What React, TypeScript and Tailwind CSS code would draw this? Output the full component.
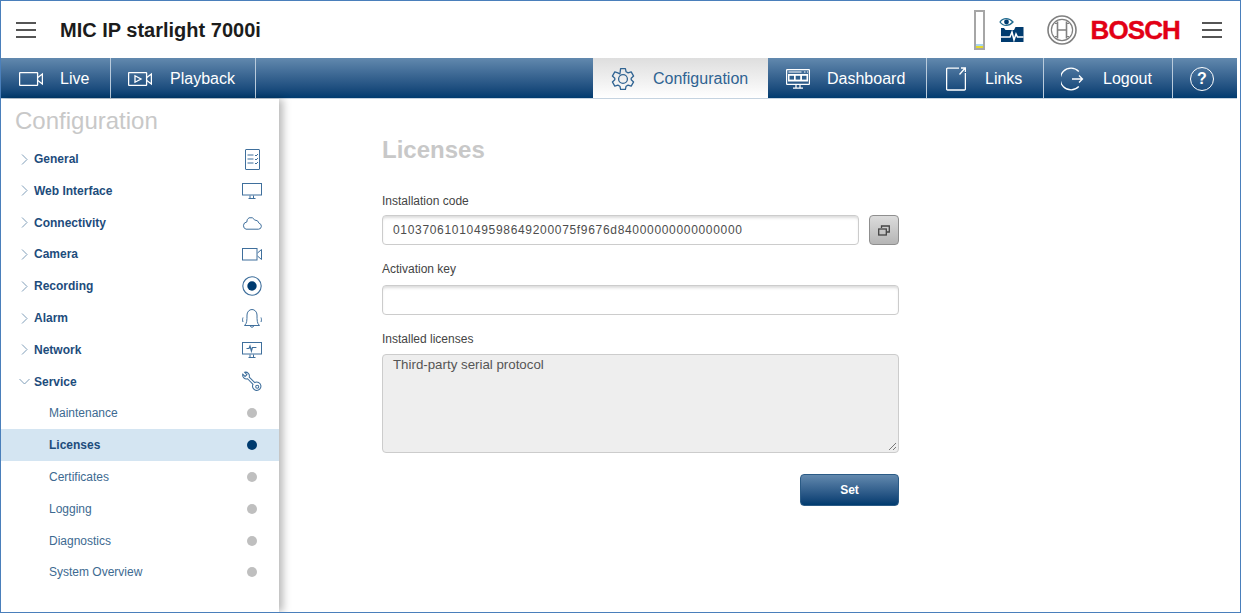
import React from 'react';

const Hamburger = () => (
  <div className="flex w-5 flex-col gap-[5px]">
    <div className="h-[2px] bg-[#555555]" />
    <div className="h-[2px] bg-[#555555]" />
    <div className="h-[2px] bg-[#555555]" />
  </div>
);

const s = { fill: 'none', stroke: 'currentColor', strokeWidth: 1.3 };

const CameraIcon = () => (
  <svg width="24" height="16" viewBox="0 0 24 16" {...s}>
    <rect x="0.6" y="1.6" width="18" height="12.8" rx="0.5" />
    <path d="M18.8 6.5 L23.4 3 V13 L18.8 9.5" />
  </svg>
);

const PlaybackIcon = () => (
  <svg width="24" height="16" viewBox="0 0 24 16" {...s}>
    <rect x="0.6" y="1.6" width="18" height="12.8" rx="0.5" />
    <path d="M18.8 6.5 L23.4 3 V13 L18.8 9.5" />
    <path d="M7 4.8 L13 8 L7 11.2 Z" />
  </svg>
);

const GearIcon = () => (
  <svg width="24" height="24" viewBox="0 0 24 24" {...s} strokeLinejoin="round">
    <circle cx="12" cy="12" r="4.4" />
    <path d="M9.6 1.6h4.8l.7 3.2 2 1.1 3.1-1 2.4 4.2-2.4 2.2v1.4l2.4 2.2-2.4 4.2-3.1-1-2 1.1-.7 3.2H9.6l-.7-3.2-2-1.1-3.1 1-2.4-4.2 2.4-2.2v-1.4L1.4 9.1l2.4-4.2 3.1 1 2 1.1z" />
  </svg>
);

const DashboardIcon = () => (
  <svg width="24" height="20" viewBox="0 0 24 20" fill="none" stroke="currentColor" strokeWidth="1.2">
    <rect x="0.6" y="0.6" width="22.8" height="14.8" rx="0.5" />
    <path d="M2.5 3h13M18 3h1.5M21 3h1" strokeWidth="1" />
    <rect x="2" y="5" width="20" height="7.5" fill="currentColor" stroke="none" />
    <rect x="3.5" y="6.8" width="4.5" height="3.8" fill="#2f5f8c" stroke="none" />
    <rect x="9.7" y="6.8" width="4.5" height="3.8" fill="#2f5f8c" stroke="none" />
    <rect x="16" y="6.8" width="4.5" height="3.8" fill="#2f5f8c" stroke="none" />
    <path d="M10 16v2.8M14 16v2.8M7 19.2h10" />
  </svg>
);

const LinksIcon = () => (
  <svg width="20" height="24" viewBox="0 0 20 24" {...s}>
    <path d="M13 1.2H1.6a1 1 0 0 0-1 1V22a1 1 0 0 0 1 1h16.8a1 1 0 0 0 1-1V6" />
    <path d="M13.5 7.5 L19.2 1 M15 1 H19.4 V5" />
  </svg>
);

const LogoutIcon = () => (
  <svg width="24" height="24" viewBox="0 0 24 24" {...s}>
    <path d="M17.8 4.5A10.8 10.8 0 1 0 17.8 19.5" />
    <path d="M11 12H21.5M18 8.5 L21.5 12 L18 15.5" />
  </svg>
);

const HelpIcon = () => (
  <div className="flex h-6 w-6 items-center justify-center rounded-full border-[1.5px] border-white text-[16px] font-bold leading-none">?</div>
);

const GeneralIcon = () => (
  <svg width="15" height="21" viewBox="0 0 15 21" fill="none" stroke="currentColor" strokeWidth="1">
    <rect x="0.5" y="0.5" width="14" height="20" rx="0.5" />
    <path d="M2.5 6h6M2.5 10h6M2.5 14h6M10 6l1 1 2-2M10 10l1 1 2-2M10 14l1 1 2-2" />
  </svg>
);

const MonitorIcon = () => (
  <svg width="20" height="16" viewBox="0 0 20 16" fill="none" stroke="currentColor" strokeWidth="1">
    <rect x="0.5" y="0.5" width="19" height="11.5" />
    <path d="M8 12.5v2.5M11.5 12.5v2.5M6.5 15.5h7" />
  </svg>
);

const CloudIcon = () => (
  <svg width="20" height="14" viewBox="0 0 20 14" fill="none" stroke="currentColor" strokeWidth="1">
    <path d="M4 13.2h12.5a3 3 0 0 0 .6-5.9A4.6 4.6 0 0 0 12.8 4 5 5 0 0 0 7 1.8 4.5 4.5 0 0 0 4.8 6 3.7 3.7 0 0 0 4 13.2z" />
  </svg>
);

const SmallCameraIcon = () => (
  <svg width="20" height="13" viewBox="0 0 20 13" fill="none" stroke="currentColor" strokeWidth="1">
    <rect x="0.5" y="0.5" width="14.5" height="11.5" />
    <path d="M15.5 5 L19.5 1.5 V11.5 L15.5 8" />
  </svg>
);

const RecordIcon = () => (
  <svg width="20" height="20" viewBox="0 0 20 20">
    <circle cx="10" cy="10" r="9.2" fill="none" stroke="currentColor" strokeWidth="1.1" />
    <circle cx="10" cy="10" r="4.7" fill="#003b6f" />
  </svg>
);

const BellIcon = () => (
  <svg width="20" height="21" viewBox="0 0 20 21" fill="none" stroke="currentColor" strokeWidth="1">
    <path d="M2.5 17.5C5 15.500 5 12 5 7a5 5.500 0 0 1 10 0c0 5 0 8.500 2.500 10.500z" />
    <path d="M8.300 18a1.800 1.800 0 0 0 3.400 0" />
    <path d="M1 9.500c-.6 1.500-.6 3 0 4.500M19 9.500c.6 1.500.6 3 0 4.500" />
  </svg>
);

const NetworkIcon = () => (
  <svg width="20" height="16" viewBox="0 0 20 16" fill="none" stroke="currentColor" strokeWidth="1">
    <rect x="0.5" y="0.5" width="19" height="11.5" />
    <path d="M4.5 6.5h2.500l1-2.500 1.400 5 1-3.500h4" strokeWidth="1.2" />
    <path d="M8 12.500v2.500M11.500 12.500v2.500M6.500 15.500h7" />
  </svg>
);

const WrenchIcon = () => (
  <svg width="21" height="21" viewBox="0 0 21 21" fill="none" stroke="currentColor" strokeWidth="1.1">
    <path d="M0.800 2.800 3.200 5.200 5.200 3.400 2.800 0.800a4 4 0 0 1 4.800 5l5.800 5.800a4.400 4.400 0 1 1-1.800 1.800L5.800 7.600A4 4 0 0 1 0.800 2.800z" />
    <circle cx="16" cy="16" r="1.600" />
  </svg>
);

const Chevron = ({ open }: { open?: boolean }) => (
  <svg width="11" height="11" viewBox="0 0 11 11" fill="none" stroke="#7f9db8" strokeWidth="1">
    {open ? <path d="M0.5 3 L5.5 8 L10.5 3" /> : <path d="M3 0.5 L8 5.5 L3 10.5" />}
  </svg>
);

const BoschArmature = () => (
  <svg width="30" height="30" viewBox="0 0 30 30" fill="none" stroke="#808080">
    <circle cx="15" cy="15" r="14" strokeWidth="1.6" />
    <circle cx="15" cy="15" r="10.6" strokeWidth="1.2" />
    <path d="M10.5 6.5v17M19.5 6.5v17M10.5 15h9" strokeWidth="1.6" />
    <path d="M10.5 8.5H8M10.5 21.5H8M19.5 8.5H22M19.5 21.5H22" strokeWidth="1" />
  </svg>
);

const tabs = [
  { label: 'Configuration', icon: <GearIcon />, cls: 'w-[175px] pl-[18px] gap-[18px]', active: true },
  { label: 'Dashboard', icon: <DashboardIcon />, cls: 'w-[159px] pl-[18px] gap-[17px]' },
  { label: 'Links', icon: <LinksIcon />, cls: 'w-[117px] pl-[19px] gap-[15px]' },
  { label: 'Logout', icon: <LogoutIcon />, cls: 'w-[129px] pl-[17px] gap-[18px]' },
];

const NavTab = ({ label, icon, cls, active }: { label: string; icon: React.ReactNode; cls: string; active?: boolean }) => (
  <div
    className={`flex h-full items-center pt-[1px] text-[16px] ${cls} ${
      active
        ? 'bg-gradient-to-b from-[#dedede] to-white text-[#2f6392]'
        : 'border-r border-[#b9cbdc] text-white'
    }`}
  >
    <div className="flex w-6 shrink-0">{icon}</div>
    <span>{label}</span>
  </div>
);

const menu = [
  { label: 'General', icon: <GeneralIcon /> },
  { label: 'Web Interface', icon: <MonitorIcon /> },
  { label: 'Connectivity', icon: <CloudIcon /> },
  { label: 'Camera', icon: <SmallCameraIcon /> },
  { label: 'Recording', icon: <RecordIcon /> },
  { label: 'Alarm', icon: <BellIcon /> },
  { label: 'Network', icon: <NetworkIcon /> },
  { label: 'Service', icon: <WrenchIcon />, open: true },
];

const subMenu = ['Maintenance', 'Licenses', 'Certificates', 'Logging', 'Diagnostics', 'System Overview'];

const fieldShadow = 'shadow-[inset_0_3px_3px_-1px_#dcdcdc]';

export default function App() {
  return (
    <div className="flex h-[613px] w-[1241px] flex-col overflow-hidden border border-[#4a7fbb] bg-white font-['Liberation_Sans',Arial,sans-serif]">
      <header className="flex h-[57px] shrink-0 items-center pl-[15px] pr-[18px]">
        <Hamburger />
        <h1 className="ml-[24px] text-[20px] font-bold text-[#1c1c1c]">MIC IP starlight 7000i</h1>
        <div className="ml-auto flex items-center">
          <div className="flex h-[40px] w-[11px] flex-col justify-end border-2 border-[#a6a6a6] bg-white">
            <div className="h-[2px] bg-[#a8d4ef]" />
            <div className="h-[2px] bg-[#e5d92a]" />
          </div>
          <svg className="ml-[14px]" width="25" height="26" viewBox="0 0 25 26">
            <path d="M1 5C4 0.500 10 0.500 14 5 10 9.500 4 9.500 1 5z" fill="#fff" stroke="#1f6a8f" strokeWidth="1.300" />
            <circle cx="7.500" cy="5" r="2.400" fill="#003b6f" />
            <path d="M2 11h3l1.500 2H15l1.500-3H24.500V25H2z" fill="#003b6f" />
            <path d="M2 20h9l2-5 2 8 2-6 1.500 3h6" fill="none" stroke="#fff" strokeWidth="1.500" />
          </svg>
          <div className="ml-[23px]">
            <BoschArmature />
          </div>
          <span className="ml-[14px] text-[26px] font-bold leading-none tracking-[-0.9px] text-[#e20015] [-webkit-text-stroke:0.4px_#e20015]">BOSCH</span>
          <div className="ml-[22px]">
            <Hamburger />
          </div>
        </div>
      </header>

      <nav className="mr-[3px] flex h-[41px] shrink-0 items-stretch border-b border-[#c5d3e0] bg-gradient-to-b from-[#6289ae] to-[#003b6f]">
        <div className="flex w-[110px] items-center gap-[17px] border-r border-[#b9cbdc] pl-[18px] pt-[1px] text-[16px] text-white">
          <CameraIcon />
          <span>Live</span>
        </div>
        <div className="flex w-[145px] items-center gap-[18px] border-r border-[#b9cbdc] pl-[17px] pt-[1px] text-[16px] text-white">
          <PlaybackIcon />
          <span>Playback</span>
        </div>
        <div className="flex-1" />
        {tabs.map((t) => (
          <NavTab key={t.label} {...t} />
        ))}
        <div className="flex w-[64px] items-center pl-[17px] pt-[1px] text-white">
          <HelpIcon />
        </div>
      </nav>

      <div className="flex min-h-0 flex-1">
        <aside className="relative w-[278px] shrink-0 bg-white shadow-[4px_0_8px_rgba(0,0,0,0.28)]">
          <h2 className="ml-[14px] mt-[7px] h-[37.2px] text-[24px] leading-[30px] text-[#c8c8c8]">Configuration</h2>
          {menu.map((m) => (
            <div key={m.label} className="flex h-[31.8px] items-center pl-[18px] text-[12px] font-bold text-[#1d4c7c]">
              <div className="flex w-[15px] shrink-0">
                <Chevron open={m.open} />
              </div>
              <span>{m.label}</span>
              <div className="ml-auto mr-[17px] flex w-[20px] justify-center text-[#3f6f9c]">{m.icon}</div>
            </div>
          ))}
          {subMenu.map((label) => {
            const active = label === 'Licenses';
            return (
              <div
                key={label}
                className={`flex h-[31.8px] items-center pl-[48px] text-[12px] ${
                  active ? 'bg-[#d4e5f2] font-bold text-[#1d4c7c]' : 'text-[#3d6a91]'
                }`}
              >
                <span>{label}</span>
                <div className={`ml-auto mr-[22px] h-[10px] w-[10px] rounded-full ${active ? 'bg-[#003b6f]' : 'bg-[#bfbfbf]'}`} />
              </div>
            );
          })}
        </aside>

        <main className="ml-[103px] w-[517px] pt-[36px] text-[12px] text-[#444444]">
          <h2 className="h-[30px] text-[24px] font-bold leading-[30px] text-[#c8c8c8]">Licenses</h2>
          <label className="mt-[28px] block h-[16px] leading-[16px]">Installation code</label>
          <div className="mt-[6px] flex gap-[10px]">
            <div className={`flex h-[30px] flex-1 items-center rounded-[4px] border border-[#cccccc] pl-[10px] text-[#4d4d4d] ${fieldShadow}`}>
              <span className="text-[12px] tracking-[0.68px]">0103706101049598649200075f9676d84000000000000000</span>
            </div>
            <button className="flex h-[30px] w-[30px] items-center justify-center rounded-[4px] border border-[#8f8f8f] bg-gradient-to-b from-[#dcdcdc] to-[#b5b5b5]">
              <svg width="12" height="11" viewBox="0 0 12 11" fill="none" stroke="#444444" strokeWidth="1.3">
                <rect x="0.7" y="4" width="7.6" height="6" />
                <path d="M3.5 3V1H11.3V7H9" />
              </svg>
            </button>
          </div>
          <label className="mt-[16px] block h-[16px] leading-[16px]">Activation key</label>
          <div className={`mt-[8px] h-[30px] rounded-[4px] border border-[#cccccc] ${fieldShadow}`} />
          <label className="mt-[16px] block h-[16px] leading-[16px]">Installed licenses</label>
          <div className="relative mt-[7px] h-[99px] rounded-[4px] border border-[#cccccc] bg-[#eeeeee] px-[10px] py-[2px] text-[13.3px] leading-[16px] text-[#555555]">
            Third-party serial protocol
            <svg className="absolute bottom-[1px] right-[1px]" width="9" height="9" viewBox="0 0 9 9" stroke="#777777" strokeWidth="1">
              <path d="M1 8 8 1M5 8l3-3" />
            </svg>
          </div>
          <div className="mt-[21px] flex justify-end">
            <button className="h-[32px] w-[99px] rounded-[4px] border border-[#2b5b86] bg-gradient-to-b from-[#6289ae] to-[#003b6f] text-[12px] font-bold text-white">
              Set
            </button>
          </div>
        </main>
      </div>
    </div>
  );
}
